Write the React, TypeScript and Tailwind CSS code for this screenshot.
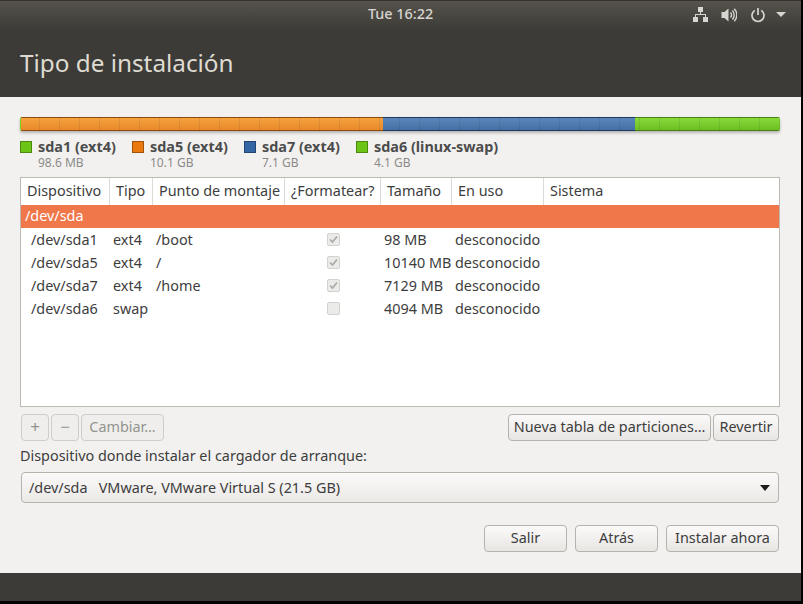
const cols = "grid grid-cols-[89px_43px_132px_96px_71px_92px_1fr]";

function Btn({ children, className = "", disabled = false }: { children: React.ReactNode; className?: string; disabled?: boolean }) {
  return (
    <div
      className={
        "flex h-[27px] items-center justify-center rounded-[4px] border pb-[2px] text-[14.4px] " +
        (disabled
          ? "border-[#cfcdc9] bg-[#efeeec] text-[#92948f] "
          : "border-[#b6b3ad] bg-gradient-to-b from-[#fbfafa] to-[#e8e6e3] text-[#3d3d3d] ") +
        className
      }
    >
      {children}
    </div>
  );
}

function Legend({ color, name, size, className = "" }: { color: string; name: string; size: string; className?: string }) {
  return (
    <div className={"flex gap-[6px] " + className}>
      <div className="mt-[2px] h-[12px] w-[12px] border border-black/30" style={{ backgroundColor: color }} />
      <div className="-mt-[1px] flex flex-col">
        <span className="text-[14.4px] leading-[17px] font-bold text-[#4c4c4c] whitespace-nowrap">{name}</span>
        <span className="mt-[1px] text-[12px] leading-[14px] text-[#8b8b88] whitespace-nowrap">{size}</span>
      </div>
    </div>
  );
}

function Check({ on }: { on: boolean }) {
  return (
    <div className="flex h-[13px] w-[13px] items-center justify-center rounded-[2px] border border-[#d3d2cf] bg-[#ebebe9]">
      {on && (
        <svg width="11" height="11" viewBox="0 0 11 11" fill="none">
          <path d="M2 5.5 L4.5 8 L9 2.5" stroke="#a9a9a6" strokeWidth="1.7" />
        </svg>
      )}
    </div>
  );
}

function Head({ label, last = false }: { label: string; last?: boolean }) {
  return (
    <div className={"flex h-[27px] items-center pb-[2px] pl-[6px] whitespace-nowrap " + (last ? "" : "border-r border-[#dcdad5]")}>{label}</div>
  );
}

const rows = [
  { dev: "/dev/sda1", type: "ext4", mount: "/boot", on: true, size: "98 MB" },
  { dev: "/dev/sda5", type: "ext4", mount: "/", on: true, size: "10140 MB" },
  { dev: "/dev/sda7", type: "ext4", mount: "/home", on: true, size: "7129 MB" },
  { dev: "/dev/sda6", type: "swap", mount: "", on: false, size: "4094 MB" },
];

export default function App() {
  return (
    <div className="h-[604px] w-[803px] overflow-hidden bg-black font-['Noto_Sans',sans-serif]">
      <div className="flex h-[601px] w-[801px] flex-col">
        {/* top panel */}
        <div className="relative flex h-[28px] items-center justify-center border-t border-[#33322e] bg-gradient-to-b from-[#55534b] to-[#3e3d38] pb-[2px]">
          <span className="text-[14.4px] font-medium text-[#d6d5d1]">Tue 16:22</span>
          <div className="absolute top-[5px] left-[692px] flex items-center">
            <svg width="17" height="17" viewBox="0 0 17 17" fill="#d6d5d1">
              <rect x="6" y="1" width="5" height="5" />
              <rect x="1" y="11" width="5" height="5" />
              <rect x="11" y="11" width="5" height="5" />
              <path d="M8 6h1v2h5v3h-1V9H4v2H3V8h5z" />
            </svg>
            <svg className="ml-[12px]" width="16" height="16" viewBox="0 0 16 16" fill="none">
              <path d="M0.5 5h3L7.5 1.5v13L3.5 11h-3z" fill="#d6d5d1" />
              <path d="M9.5 5.5a3.5 3.5 0 0 1 0 5M11.3 3.6a6 6 0 0 1 0 8.8M13.2 1.8a8.6 8.6 0 0 1 0 12.4" stroke="#d6d5d1" strokeWidth="1.4" />
            </svg>
            <svg className="ml-[13px]" width="16" height="16" viewBox="0 0 16 16" fill="none">
              <path d="M4.8 3.4a6 6 0 1 0 6.4 0" stroke="#d6d5d1" strokeWidth="1.7" />
              <path d="M8 1v7" stroke="#d6d5d1" strokeWidth="1.7" />
            </svg>
            <svg className="ml-[10px]" width="10" height="5" viewBox="0 0 10 5">
              <path d="M0 0h10L5 5z" fill="#d6d5d1" />
            </svg>
          </div>
        </div>

        {/* title */}
        <div className="flex h-[69px] items-center bg-[#3c3b37] pt-[1px] pl-[20px]">
          <h1 className="text-[24.3px] font-normal text-[#dfdbd2]">Tipo de instalación</h1>
        </div>

        {/* content */}
        <div className="flex h-[476px] flex-col bg-[#f2f1f0] px-[20px] pt-[20px]">
          {/* partition bar */}
          <div className="relative flex h-[14px] w-[760px] overflow-hidden rounded-[2px] shadow-[0_2px_3px_rgba(0,0,0,0.25)]">
            <div className="w-[1px] bg-[#73d216]" />
            <div className="w-[362px] border-y border-[#8f4c0c] bg-gradient-to-b from-[#f5a33e] to-[#e8882a]" />
            <div className="w-[252px] border-y border-[#1f3a5f] bg-gradient-to-b from-[#5a86ba] to-[#4570a5]" />
            <div className="flex-1 border-y border-[#46820f] bg-gradient-to-b from-[#8ad93a] to-[#6bbf22]" />
            <div className="absolute inset-0 bg-[repeating-linear-gradient(90deg,transparent_0,transparent_19px,rgba(0,0,0,0.08)_19px,rgba(0,0,0,0.08)_20px)]" />
          </div>

          {/* legend */}
          <div className="mt-[8px] flex h-[31px]">
            <Legend color="#6cc417" name="sda1 (ext4)" size="98.6 MB" className="w-[112px]" />
            <Legend color="#e9780e" name="sda5 (ext4)" size="10.1 GB" className="w-[112px]" />
            <Legend color="#3465a4" name="sda7 (ext4)" size="7.1 GB" className="w-[112px]" />
            <Legend color="#6cc417" name="sda6 (linux-swap)" size="4.1 GB" />
          </div>

          {/* table */}
          <div className="mt-[7px] h-[230px] w-[760px] border border-[#bdbab4] bg-white text-[14.4px] text-[#3d3d3d]">
            <div className={cols}>
              <Head label="Dispositivo" />
              <Head label="Tipo" />
              <Head label="Punto de montaje" />
              <Head label="¿Formatear?" />
              <Head label="Tamaño" />
              <Head label="En uso" />
              <Head label="Sistema" last />
            </div>
            <div className="flex h-[23px] items-center bg-[#f0774a] pb-[2px] pl-[4px] text-white">/dev/sda</div>
            {rows.map((r) => (
              <div key={r.dev} className={cols + " h-[23px] items-center whitespace-nowrap"}>
                <div className="pl-[10px]">{r.dev}</div>
                <div className="pl-[3px]">{r.type}</div>
                <div className="pl-[3px]">{r.mount}</div>
                <div className="flex justify-center"><Check on={r.on} /></div>
                <div className="pl-[3px]">{r.size}</div>
                <div className="pl-[3px]">desconocido</div>
                <div />
              </div>
            ))}
          </div>

          {/* toolbar */}
          <div className="mt-[7px] flex h-[27px] pl-[1px] pr-[2px]">
            <Btn disabled className="w-[28px] text-[17px]">+</Btn>
            <Btn disabled className="ml-[2px] w-[28px] text-[17px]">−</Btn>
            <Btn disabled className="ml-[2px] w-[83px]">Cambiar…</Btn>
            <Btn className="ml-auto w-[203px]">Nueva tabla de particiones…</Btn>
            <Btn className="ml-[2px] w-[66px]">Revertir</Btn>
          </div>

          <div className="mt-[6px] h-[18px] text-[14.4px] leading-[18px] text-[#3d3d3d]">Dispositivo donde instalar el cargador de arranque:</div>

          {/* combo */}
          <div className="mt-[7px] mr-[2px] ml-[1px] flex h-[31px] items-center justify-between rounded-[4px] border border-[#b6b3ad] bg-gradient-to-b from-[#fbfafa] to-[#ebe9e6] pl-[7px] pr-[8px] text-[14.4px] text-[#3d3d3d]">
            <span className="whitespace-pre">/dev/sda   VMware, VMware Virtual S (21.5 GB)</span>
            <svg width="10" height="6" viewBox="0 0 10 6"><path d="M0 0h10L5 6z" fill="#1c1c1c" /></svg>
          </div>

          {/* actions */}
          <div className="mt-[22px] mr-[2px] flex justify-end gap-[8px]">
            <Btn className="w-[83px]">Salir</Btn>
            <Btn className="w-[83px]">Atrás</Btn>
            <Btn className="w-[113px]">Instalar ahora</Btn>
          </div>
        </div>

        {/* footer */}
        <div className="h-[28px] bg-[#3c3b37]" />
      </div>
    </div>
  );
}
